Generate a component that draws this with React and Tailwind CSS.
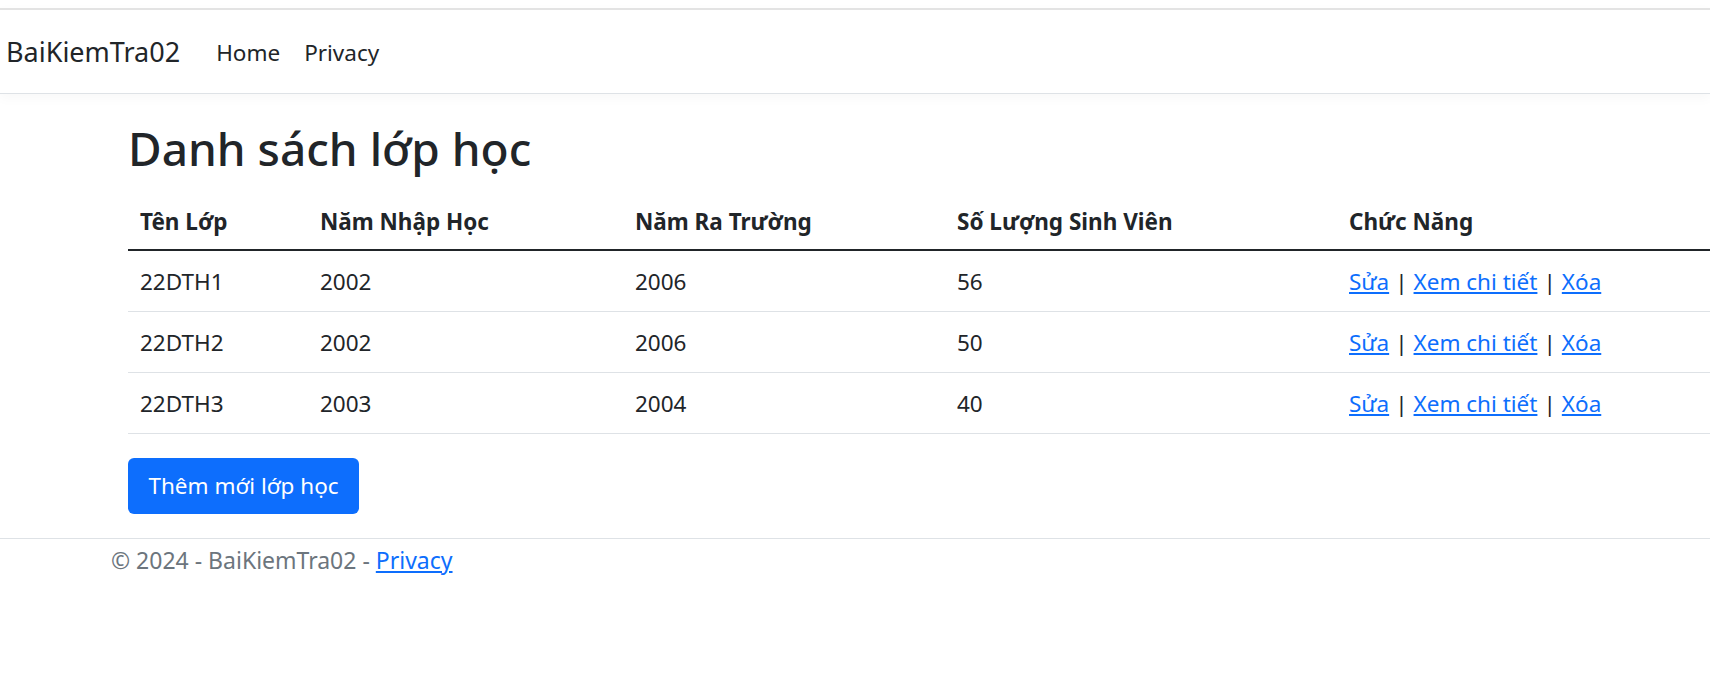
import React from 'react';

const rows = [
  { ten: '22DTH1', nhap: '2002', ra: '2006', sl: '56' },
  { ten: '22DTH2', nhap: '2002', ra: '2006', sl: '50' },
  { ten: '22DTH3', nhap: '2003', ra: '2004', sl: '40' },
];

const font = { fontFamily: '"Noto Sans", "Open Sans", sans-serif' };

export default function App() {
  return (
    <div className="min-h-screen bg-white text-[#212529]" style={font}>
      {/* Navbar */}
      <div className="pt-[8px]">
        <header className="h-[86px] border-t-2 border-b border-t-[#e3e3e3] border-b-[#dee2e6] bg-white flex items-center shadow-[0_4px_12px_rgba(0,0,0,0.03)]">
          <a href="#" className="ml-[6px] text-[27px] text-[#212529] mt-[2px]">BaiKiemTra02</a>
          <nav className="flex ml-[36px] gap-[24px] text-[22.5px] text-[#212529] mt-[2px]">
            <a href="#">Home</a>
            <a href="#">Privacy</a>
          </nav>
        </header>
      </div>

      {/* Main */}
      <main className="pl-[128px] pb-[24px]">
        <h1 className="text-[46px] leading-[56px] font-medium pt-[26px] pb-[15px]">Danh sách lớp học</h1>
        <table className="w-[1582px] text-[22.5px] border-collapse">
          <thead>
            <tr className="border-b-2 border-[#212529] h-[59px]">
              <th className="w-[180px] text-left pl-[12px] pt-[3px] font-bold">Tên Lớp</th>
              <th className="w-[315px] text-left pl-[12px] pt-[3px] font-bold">Năm Nhập Học</th>
              <th className="w-[322px] text-left pl-[12px] pt-[3px] font-bold">Năm Ra Trường</th>
              <th className="w-[392px] text-left pl-[12px] pt-[3px] font-bold">Số Lượng Sinh Viên</th>
              <th className="text-left pl-[12px] pt-[3px] font-bold">Chức Năng</th>
            </tr>
          </thead>
          <tbody>
            {rows.map((r) => (
              <tr key={r.ten} className="border-b border-[#dee2e6] h-[61px]">
                <td className="pl-[12px] pt-[2px]">{r.ten}</td>
                <td className="pl-[12px] pt-[2px]">{r.nhap}</td>
                <td className="pl-[12px] pt-[2px]">{r.ra}</td>
                <td className="pl-[12px] pt-[2px]">{r.sl}</td>
                <td className="pl-[12px] pt-[2px] whitespace-nowrap">
                  <a href="#" className="text-[#0d6efd] underline">Sửa</a>
                  <span className="mx-[6px]">|</span>
                  <a href="#" className="text-[#0d6efd] underline">Xem chi tiết</a>
                  <span className="mx-[6px]">|</span>
                  <a href="#" className="text-[#0d6efd] underline">Xóa</a>
                </td>
              </tr>
            ))}
          </tbody>
        </table>
        <button className="mt-[24px] w-[231px] h-[56px] rounded-[6px] bg-[#0d6efd] text-white text-[22.5px]">
          Thêm mới lớp học
        </button>
      </main>

      {/* Footer */}
      <footer className="border-t border-[#dee2e6] pl-[111px] pt-[4px] text-[23px] text-[#6c757d]">
        © 2024 - BaiKiemTra02 - <a href="#" className="text-[#0d6efd] underline">Privacy</a>
      </footer>
    </div>
  );
}
